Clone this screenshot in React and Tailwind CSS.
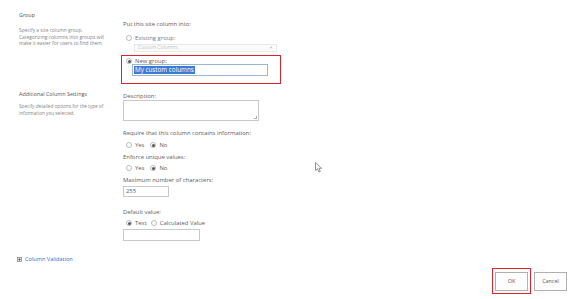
import React from 'react';

const Radio = ({ checked }) => (
    <span className="inline-flex items-center justify-center w-[6px] h-[6px] rounded-full border border-[#bcbcbc] bg-white">
        {checked && <span className="w-[3px] h-[3px] rounded-full bg-[#555]" />}
    </span>
);

const Choice = ({ label, checked }) => (
    <span className="flex items-center gap-[3px]">
        <Radio checked={checked} />
        <span>{label}</span>
    </span>
);

const App = () => {
    return (
        <div className="relative w-[576px] h-[299px] bg-white overflow-hidden text-[#5c5c5c]" style={{ fontFamily: '"Open Sans", "Noto Sans", sans-serif' }}>
            {/* Group section */}
            <div className="flex pt-[11px]">
                <div className="w-[104px] ml-[19px]">
                    <div className="text-[5.4px] leading-[8px] text-[#555]">Group</div>
                    <div className="mt-[8px] text-[4.9px] leading-[6.7px] text-[#858585]">
                        Specify a site column group.<br />
                        Categorizing columns into groups will<br />
                        make it easier for users to find them.
                    </div>
                </div>
                <div className="pt-[9px] text-[5.9px]">
                    <div className="leading-[8px]">Put this site column into:</div>
                    <div className="mt-[6px] ml-[3px] leading-[8px] text-[#7a7a7a]">
                        <Choice label="Existing group:" />
                    </div>
                    <div className="mt-[2px] ml-[11px] w-[143px] h-[8px] border border-[#e8e8e8] bg-[#fcfcfc] flex items-center justify-between px-[3px] text-[#c2c2c2] text-[5px]">
                        <span>Custom Columns</span>
                        <span className="text-[4px]">▼</span>
                    </div>
                    <div className="mt-[3px] -ml-[2px] w-[160px] h-[29px] border-[1.5px] border-[#d9232e] pt-[1px]">
                        <div className="ml-[4px] leading-[8px]">
                            <Choice label="New group:" checked />
                        </div>
                        <div className="mt-[-1px] ml-[10px] w-[136px] h-[12px] border border-[#9fb5d8] flex items-center px-[1px]">
                            <span className="bg-[#3b7bd4] text-white text-[6.3px] leading-[8px] px-[1px]">My custom columns</span>
                        </div>
                    </div>
                </div>
            </div>

            {/* Additional column settings */}
            <div className="flex mt-[6px]">
                <div className="w-[104px] ml-[19px]">
                    <div className="text-[5.4px] leading-[8px] text-[#555]">Additional Column Settings</div>
                    <div className="mt-[5px] text-[4.7px] leading-[7px] text-[#858585]">
                        Specify detailed options for the type of<br />
                        information you selected.
                    </div>
                </div>
                <div className="pt-[2px] text-[5.9px]">
                    <div className="leading-[8px]">Description:</div>
                    <div className="relative w-[136px] h-[21px] border border-[#c9c9c9]">
                        <span className="absolute right-[1px] bottom-[1px] w-[3px] h-[3px] border-r border-b border-[#aaa]" />
                    </div>
                    <div className="mt-[8px] leading-[8px]">Require that this column contains information:</div>
                    <div className="mt-[4px] ml-[3px] flex gap-[6px] leading-[8px]">
                        <Choice label="Yes" />
                        <Choice label="No" checked />
                    </div>
                    <div className="mt-[4px] leading-[8px]">Enforce unique values:</div>
                    <div className="mt-[3px] ml-[3px] flex gap-[6px] leading-[8px]">
                        <Choice label="Yes" />
                        <Choice label="No" checked />
                    </div>
                    <div className="mt-[4px] leading-[8px]">Maximum number of characters:</div>
                    <div className="mt-[2px] w-[46px] h-[11px] border border-[#c9c9c9] flex items-center px-[2px]">255</div>
                    <div className="mt-[11px] leading-[8px]">Default value:</div>
                    <div className="mt-[3px] ml-[3px] flex gap-[4px] leading-[8px]">
                        <Choice label="Text" checked />
                        <Choice label="Calculated Value" />
                    </div>
                    <div className="mt-[2px] w-[77px] h-[12px] border border-[#c9c9c9]" />
                </div>
            </div>

            {/* Column validation */}
            <div className="mt-[14px] ml-[17px] flex items-center gap-[3px] text-[5.6px] leading-[8px] text-[#2f6fb9]">
                <svg width="5" height="5" viewBox="0 0 5 5">
                    <rect x="0.5" y="0.5" width="4" height="4" fill="#f4f4f4" stroke="#8a8a8a" strokeWidth="0.8" />
                    <path d="M1.3 2.5 H3.7 M2.5 1.3 V3.7" stroke="#444" strokeWidth="0.8" />
                </svg>
                <span>Column Validation</span>
            </div>

            {/* Buttons */}
            <div className="absolute left-[492px] top-[268px] flex items-center gap-[3px]">
                <div className="w-[39px] h-[26px] border-[1.5px] border-[#d9232e] flex items-center justify-center">
                    <button className="w-[33px] h-[19px] border border-[#b0b0b0] bg-[#fdfdfd] text-[5.4px] text-[#555]">OK</button>
                </div>
                <button className="w-[33px] h-[19px] border border-[#b0b0b0] bg-[#fdfdfd] text-[5.4px] text-[#555]">Cancel</button>
            </div>

            {/* mouse cursor */}
            <svg className="absolute left-[315px] top-[162px]" width="8" height="11" viewBox="0 0 8 11">
                <path d="M0.5 0.5 L0.5 8.5 L2.5 6.8 L4 10 L5.3 9.4 L3.9 6.3 L6.5 6.3 Z" fill="#fff" stroke="#666" strokeWidth="0.7" />
            </svg>
        </div>
    );
};

export default App;
